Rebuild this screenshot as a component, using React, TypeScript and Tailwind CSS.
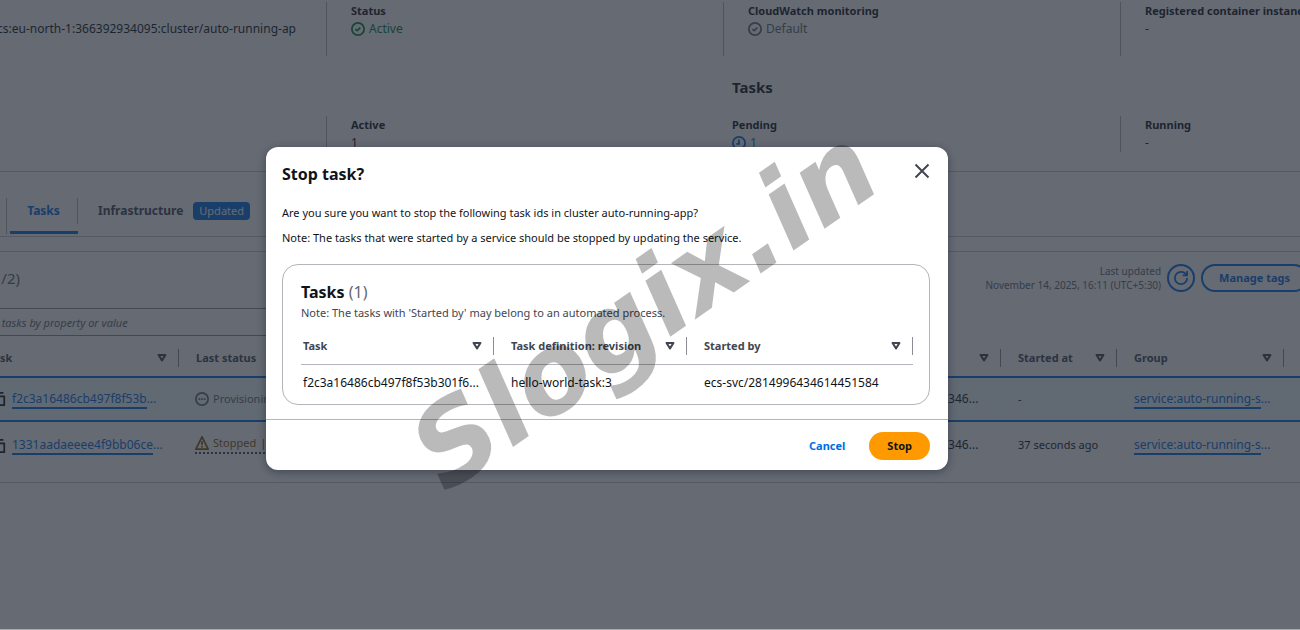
import type { ReactNode } from 'react'

interface IconProps {
  className?: string
  children: ReactNode
}

function Icon({ className = 'size-3.5', children }: IconProps) {
  return (
    <svg
      viewBox="0 0 16 16"
      className={`shrink-0 ${className}`}
      fill="none"
      stroke="currentColor"
      strokeWidth={2}
      strokeLinejoin="round"
      aria-hidden="true"
    >
      {children}
    </svg>
  )
}

const CheckIcon = () => (
  <Icon>
    <circle cx="8" cy="8" r="7" />
    <path d="m5 8 2 2 3.6-3.6" />
  </Icon>
)

const ClockIcon = () => (
  <Icon>
    <circle cx="8" cy="8" r="7" />
    <path d="M8 4v5H5" />
  </Icon>
)

const ProgressIcon = () => (
  <Icon>
    <circle cx="8" cy="8" r="7" />
    <path d="M4 8h2M7 8h2M10 8h2" />
  </Icon>
)

const WarningIcon = () => (
  <Icon>
    <path d="M8 1 1 15h14L8 1Z" />
    <path d="M8 6v4M8 11v2" />
  </Icon>
)

const CopyIcon = () => (
  <Icon>
    <path d="M2 5h12v10H2zM5 5V1h8" />
  </Icon>
)

const RefreshIcon = () => (
  <Icon>
    <path d="M10 5h5V0" />
    <path d="M15 8a7 7 0 0 1-14 0 7 7 0 0 1 7-7 6.9 6.9 0 0 1 6.3 4" />
  </Icon>
)

const CloseIcon = () => (
  <Icon className="size-4">
    <path d="m1.5 1.5 13 13M14.5 1.5l-13 13" />
  </Icon>
)

const SortIcon = () => (
  <Icon className="size-2.5">
    <path d="M2.5 3h11L8 12Z" strokeWidth={3.2} />
  </Icon>
)

interface FieldProps {
  label?: string
  divider?: boolean
  className?: string
  children?: ReactNode
}

function Field({ label, divider = true, className = 'pl-6', children }: FieldProps) {
  return (
    <div className={`min-w-0 overflow-hidden whitespace-nowrap ${divider ? 'border-l border-[#b4b4bb]' : ''} ${className}`}>
      <div className="h-[18px] text-[11px] font-bold text-[#0f141a]">{label}</div>
      <div className="flex items-center gap-1">{children}</div>
    </div>
  )
}

interface HeaderCellProps {
  label: string
  className?: string
  innerClassName?: string
}

function HeaderCell({ label, className = 'pt-[3px]', innerClassName = 'pl-[17px]' }: HeaderCellProps) {
  return (
    <th scope="col" className={`p-0 text-left text-[11px] font-bold text-[#424650] ${className}`}>
      <div className={`flex h-[18px] items-center justify-between border-r border-[#8c8c94] pr-[11px] ${innerClassName}`}>
        <span className="whitespace-nowrap">{label}</span>
        <button type="button" aria-label={`Sort by ${label}`}>
          <SortIcon />
        </button>
      </div>
    </th>
  )
}

interface TaskRow {
  id: string
  status: 'provisioning' | 'stopped'
  startedAt: string
  selected: boolean
}

const tasks: TaskRow[] = [
  { id: 'f2c3a16486cb497f8f53b', status: 'provisioning', startedAt: '-', selected: true },
  { id: '1331aadaeeee4f9bb06ce', status: 'stopped', startedAt: '37 seconds ago', selected: false },
]

function Summary() {
  return (
    <section className="h-[172px] border-b border-[#c6c6cd] pt-0.5">
      <div className="grid h-[54px] grid-cols-[326fr_397fr_397fr_180fr]">
        <Field divider={false} className="flex flex-col items-end pr-[30px]">
          arn:aws:ecs:eu-north-1:366392934095:cluster/auto-running-ap
        </Field>
        <Field label="Status">
          <span className="flex items-center gap-1 text-[#00802f]"><CheckIcon />Active</span>
        </Field>
        <Field label="CloudWatch monitoring">
          <span className="flex items-center gap-1 text-[#656871]"><CheckIcon />Default</span>
        </Field>
        <Field label="Registered container instances">-</Field>
      </div>
      <div className="grid h-[60px] grid-cols-[732fr_568fr] items-center">
        <h2 className="col-start-2 pt-0.5 text-[15px] font-bold text-[#0f141a]">Tasks</h2>
      </div>
      <div className="grid h-9 grid-cols-[326fr_406fr_388fr_180fr]">
        <span />
        <Field label="Active">1</Field>
        <Field label="Pending" divider={false} className="pl-0">
          <a href="#pending" className="flex items-center gap-1 text-[#006ce0]"><ClockIcon />1</a>
        </Field>
        <Field label="Running">-</Field>
      </div>
    </section>
  )
}

function Tabs() {
  return (
    <nav className="flex h-[65px] items-end border-b border-[#c6c6cd] pb-0.5 pl-1.5 font-bold">
      <div className="flex h-9 items-start border-l border-[#b4b4bb] pl-[3px]">
        <a href="#tasks" className="flex h-9 w-[68px] flex-col border-b-[3px] border-[#006ce0] text-center text-[#006ce0]">
          <span className="h-[26px] border-r border-[#b4b4bb] leading-[26px]">Tasks</span>
        </a>
        <a href="#infrastructure" className="flex h-[26px] items-center gap-2.5 border-r border-[#b4b4bb] pl-5 pr-4 text-[#424650]">
          Infrastructure
          <span className="rounded bg-[#006ce0] px-1.5 text-[11px] font-normal leading-[18px] text-white">Updated</span>
        </a>
      </div>
    </nav>
  )
}

function TaskTable() {
  return (
    <section className="mt-3.5 border-y border-[#c6c6cd]">
      <div className="flex h-14 items-center justify-between pb-1">
        <h2 className="flex w-5 justify-end overflow-hidden whitespace-nowrap text-[15px] text-[#656871]">
          <b className="text-[#0f141a]">Tasks</b>&nbsp;(1/2)
        </h2>
        <div className="-mr-2 flex items-center gap-1.5">
          <p className="text-right text-[10px] leading-[14px] text-[#656871]">
            Last updated<br />November 14, 2025, 16:11 (UTC+5:30)
          </p>
          <button type="button" aria-label="Refresh" className="flex size-7 items-center justify-center rounded-full border-2 border-[#006ce0] text-[#006ce0]">
            <RefreshIcon />
          </button>
          <button type="button" className="h-7 whitespace-nowrap rounded-full border-2 border-[#006ce0] px-4 text-[11px] font-bold text-[#006ce0]">
            Manage tags
          </button>
        </div>
      </div>
      <input
        type="search"
        aria-label="Find tasks"
        placeholder="Find tasks by property or value"
        className="-ml-14 block h-7 w-1/2 border border-[#8c8c94] pl-[33px] text-[11px] italic placeholder:text-[#656871]"
      />
      <table className="w-full table-fixed border-collapse">
        <colgroup>
          <col className="w-[179px]" />
          <col />
          <col className="w-[168px]" />
          <col className="w-[116px]" />
          <col className="w-[167px]" />
          <col className="w-[16px]" />
        </colgroup>
        <thead>
          <tr className="h-[41px]">
            <HeaderCell label="Task" innerClassName="-ml-3 pl-0" />
            <HeaderCell label="Last status" />
            <HeaderCell label="Started by" />
            <HeaderCell label="Started at" />
            <HeaderCell label="Group" />
            <td />
          </tr>
        </thead>
        <tbody>
          {tasks.map((task) => (
            <tr
              key={task.id}
              className={`whitespace-nowrap ${task.selected ? 'h-11 border-y-2 border-[#006ce0] bg-[#f0fbff]' : 'h-[61px] align-top'}`}
            >
              <td className={`p-0 ${task.selected ? '' : 'pt-3.5'}`}>
                <div className="-ml-2 flex items-center gap-1.5">
                  <button type="button" aria-label="Copy task ID"><CopyIcon /></button>
                  <span className="text-[#006ce0]">
                    <a href={`#${task.id}`} className="inline-block border-b-2 border-[#006ce0] leading-4">{task.id}</a>...
                  </span>
                </div>
              </td>
              <td className={`p-0 pl-4 text-[11px] ${task.selected ? '' : 'pt-3'}`}>
                {task.status === 'provisioning' ? (
                  <span className="flex items-center gap-1 text-[#656871]"><ProgressIcon />Provisioning</span>
                ) : (
                  <span className="inline-flex items-center gap-1 border-b-2 border-dotted border-[#424650] text-[#855900]">
                    <WarningIcon />Stopped <span className="text-[#424650]">| Essential container exited</span>
                  </span>
                )}
              </td>
              <td className={`p-0 pl-4 ${task.selected ? '' : 'pt-3.5'}`}>ecs-svc/28149964346...</td>
              <td className={`p-0 pl-[17px] text-[11px] ${task.selected ? '' : 'pt-3.5'}`}>{task.startedAt}</td>
              <td className={`p-0 pl-[17px] text-[#006ce0] ${task.selected ? '' : 'pt-3.5'}`}>
                <a href="#service" className="inline-block border-b-2 border-[#006ce0] leading-4">service:auto-running-s</a>...
              </td>
              <td />
            </tr>
          ))}
        </tbody>
      </table>
    </section>
  )
}

function StopTaskDialog() {
  return (
    <div
      role="dialog"
      aria-modal="true"
      aria-labelledby="stop-title"
      className="w-full max-w-[682px] rounded-xl bg-white shadow-[0_2px_8px_rgba(0,7,22,0.35)]"
    >
      <header className="flex items-start justify-between px-4 pt-4">
        <h1 id="stop-title" className="text-base font-bold leading-[22px]">Stop task?</h1>
        <button type="button" aria-label="Close" className="pr-0.5 text-[#424650]">
          <CloseIcon />
        </button>
      </header>
      <div className="pl-4 pr-[18px] pt-[19px] text-[11px]">
        <p>Are you sure you want to stop the following task ids in cluster auto-running-app?</p>
        <p className="mt-[7px]">Note: The tasks that were started by a service should be stopped by updating the service.</p>
        <section className="mt-[17px] rounded-2xl border border-[#b4b4bb] pb-2.5 pl-[18px] pr-4 pt-4">
          <h2 className="text-base font-bold leading-[22px]">
            Tasks <span className="font-normal text-[#656871]">(1)</span>
          </h2>
          <p className="mt-px text-[#424650]">Note: The tasks with &apos;Started by&apos; may belong to an automated process.</p>
          <table className="mt-1.5 w-full table-fixed border-collapse text-xs leading-[18px]">
            <colgroup>
              <col className="w-[193px]" />
              <col className="w-[193px]" />
              <col />
            </colgroup>
            <thead>
              <tr className="h-9 border-b border-[#b4b4bb]">
                <HeaderCell label="Task" className="pt-px" innerClassName="pl-0.5" />
                <HeaderCell label="Task definition: revision" className="pt-px" />
                <HeaderCell label="Started by" className="pt-px" />
              </tr>
            </thead>
            <tbody>
              <tr className="h-[30px] align-bottom">
                <td className="p-0 pb-0.5 pl-0.5">f2c3a16486cb497f8f53b301f6...</td>
                <td className="p-0 pb-0.5 pl-[17px]">hello-world-task:3</td>
                <td className="p-0 pb-0.5 pl-[17px]">ecs-svc/2814996434614451584</td>
              </tr>
            </tbody>
          </table>
        </section>
      </div>
      <footer className="mt-3.5 flex items-center justify-end gap-6 border-t border-[#b4b4bb] px-[18px] pb-2.5 pt-3 text-[11px] font-bold">
        <button type="button" className="text-[#006ce0]">Cancel</button>
        <button type="button" className="h-7 rounded-full bg-[#ff9900] px-[18px]">Stop</button>
      </footer>
    </div>
  )
}

export default function App() {
  return (
    <div className="relative min-h-screen overflow-hidden bg-white font-['Noto_Sans','Open_Sans',sans-serif] text-xs leading-[18px] text-[#0f141a]">
      <main>
        <Summary />
        <Tabs />
        <TaskTable />
      </main>
      <div className="absolute inset-0 flex items-center justify-center border-b border-[#a8abb0] bg-[#232b37]/70 pb-3 pr-[86px]">
        <StopTaskDialog />
      </div>
      <div className="pointer-events-none absolute inset-0 flex items-center justify-center pb-3 pr-3">
        <span className="-rotate-35 font-['DejaVu_Sans',sans-serif] text-[110px] font-bold italic leading-none text-black/27">
          Slogix.in
        </span>
      </div>
    </div>
  )
}
